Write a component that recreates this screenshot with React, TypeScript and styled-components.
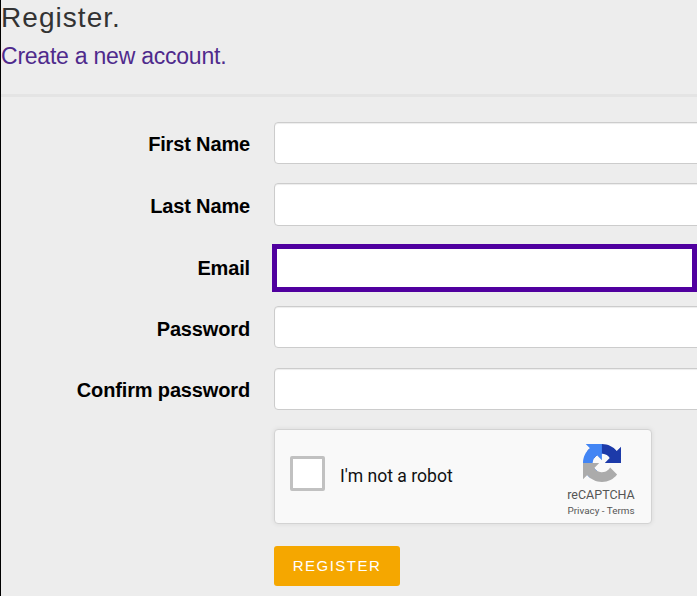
import React from "react";
import styled, { createGlobalStyle } from "styled-components";

const GlobalStyle = createGlobalStyle`
  * { box-sizing: border-box; }
  body {
    margin: 0;
    overflow: hidden;
    background: #ededed;
    font-family: "Liberation Sans", Arial, sans-serif;
  }
`;

const Page = styled.main`
  height: 596px;
  overflow: hidden;
  border-left: 1px solid #000;
  background: #ededed;
`;

const Header = styled.header`
  height: 97px;
  border-bottom: 3px solid #e4e4e4;
`;

const Title = styled.h1`
  margin: 0;
  padding-top: 1px;
  font-size: 28px;
  line-height: 33px;
  font-weight: 400;
  letter-spacing: 1.05px;
  color: #333;
`;

const Subtitle = styled.h2`
  margin: 9px 0 0;
  font-size: 23px;
  line-height: 26px;
  font-weight: 400;
  letter-spacing: -0.23px;
  color: #4f2a8c;
`;

const Form = styled.form`
  padding-top: 25px;
`;

const Row = styled.div<{ $gap: number }>`
  display: grid;
  grid-template-columns: 249px 480px;
  column-gap: 24px;
  align-items: center;
  margin-bottom: ${(p) => p.$gap}px;
`;

const Label = styled.label<{ $drop: number }>`
  text-align: right;
  font-size: 20px;
  line-height: 24px;
  font-weight: 700;
  letter-spacing: -0.15px;
  color: #000;
  white-space: nowrap;
  padding-top: ${(p) => p.$drop}px;
`;

const Input = styled.input<{ $height: number; $focused?: boolean }>`
  width: ${(p) => (p.$focused ? "425px" : "480px")};
  height: ${(p) => p.$height}px;
  margin: 0 0 0 ${(p) => (p.$focused ? "-2px" : "0")};
  padding: 6px 12px;
  border: ${(p) => (p.$focused ? "5px solid #50009f" : "1px solid #ccc")};
  border-radius: ${(p) => (p.$focused ? "0" : "4px")};
  background: #fff;
  box-shadow: ${(p) => (p.$focused ? "none" : "inset 0 1px 1px rgba(0, 0, 0, 0.075)")};
  outline: none;
`;

const Actions = styled.div`
  padding-left: 273px;
`;

const Captcha = styled.div`
  display: flex;
  width: 378px;
  height: 95px;
  padding-left: 15px;
  border: 1px solid #d3d3d3;
  border-radius: 4px;
  background: #f9f9f9;
  box-shadow: 0 0 4px 1px rgba(0, 0, 0, 0.06);
  font-family: Roboto, sans-serif;
`;

const CheckBox = styled.span`
  width: 35px;
  height: 35px;
  margin-top: 26px;
  border: 3px solid #c1c1c1;
  border-radius: 2px;
  background: #fff;
`;

const CaptchaText = styled.span`
  width: 200px;
  margin: 34px 0 0 15px;
  font-size: 17.6px;
  line-height: 24px;
  color: #111;
`;

const Brand = styled.div`
  display: flex;
  flex-direction: column;
  align-items: center;
  width: 100px;
  margin-left: 11px;
  padding-top: 14px;
  color: #555;
  white-space: nowrap;
  flex: none;
`;

const BrandName = styled.span`
  margin-top: 5px;
  font-size: 12.5px;
  line-height: 16px;
`;

const BrandLinks = styled.span`
  margin-top: 2px;
  font-size: 9.9px;
  line-height: 12px;
`;

const Submit = styled.button`
  display: block;
  width: 126px;
  height: 40px;
  margin-top: 22px;
  padding: 0 0 2px;
  border: 0;
  border-radius: 3px;
  background: #f5a700;
  color: #fff;
  font-family: "Liberation Sans", Arial, sans-serif;
  font-size: 15px;
  letter-spacing: 1.5px;
`;

const Logo = styled.svg`
  margin-left: 2px;
`;

const RecaptchaLogo = () => (
  <Logo width="38" height="38" viewBox="0 0 64 64" aria-hidden="true">
    <path fill="#1C3AA9" d="M64 31.955l-.033-1.37V4.687l-7.16 7.16C50.948 4.674 42.033.093 32.05.093c-10.389 0-19.622 4.96-25.458 12.64l11.736 11.86a15.55 15.55 0 0 1 4.754-5.334c2.05-1.6 4.952-2.906 8.968-2.906.485 0 .86.057 1.135.163 4.976.393 9.288 3.14 11.828 7.124l-8.307 8.307L64 31.953" />
    <path fill="#4285F4" d="M31.862.094l-1.37.033H4.594l7.16 7.16C4.58 13.147 0 22.06 0 32.046c0 10.388 4.96 19.622 12.64 25.458L24.5 45.768a15.55 15.55 0 0 1-5.334-4.754c-1.6-2.05-2.906-4.952-2.906-8.968 0-.485.057-.86.163-1.135.393-4.976 3.14-9.288 7.124-11.828l8.307 8.307L31.86.095" />
    <path fill="#ABABAB" d="M.001 32.045l.033 1.37v25.898l7.16-7.16c5.86 7.173 14.774 11.754 24.76 11.754 10.388 0 19.622-4.96 25.458-12.64l-11.736-11.86a15.55 15.55 0 0 1-4.754 5.334c-2.05 1.6-4.952 2.906-8.968 2.906-.485 0-.86-.057-1.135-.163-4.976-.393-9.288-3.14-11.828-7.124l8.307-8.307L.001 32.047" />
  </Logo>
);

const fields = [
  { id: "first", label: "First Name", type: "text", height: 42, gap: 19, drop: 2 },
  { id: "last", label: "Last Name", type: "text", height: 43, gap: 18, drop: 2 },
  { id: "email", label: "Email", type: "email", height: 48, gap: 14, drop: 0, focused: true },
  { id: "password", label: "Password", type: "password", height: 42, gap: 20, drop: 4 },
  { id: "confirm", label: "Confirm password", type: "password", height: 42, gap: 19, drop: 2 },
];

export default function App() {
  return (
    <>
      <GlobalStyle />
      <Page>
        <Header>
          <Title>Register.</Title>
          <Subtitle>Create a new account.</Subtitle>
        </Header>
        <Form>
          {fields.map((f) => (
            <Row key={f.id} $gap={f.gap}>
              <Label htmlFor={f.id} $drop={f.drop}>{f.label}</Label>
              <Input id={f.id} type={f.type} $height={f.height} $focused={f.focused} />
            </Row>
          ))}
          <Actions>
            <Captcha>
              <CheckBox role="checkbox" aria-checked="false" />
              <CaptchaText>I'm not a robot</CaptchaText>
              <Brand>
                <RecaptchaLogo />
                <BrandName>reCAPTCHA</BrandName>
                <BrandLinks>Privacy - Terms</BrandLinks>
              </Brand>
            </Captcha>
            <Submit type="button">REGISTER</Submit>
          </Actions>
        </Form>
      </Page>
    </>
  );
}
